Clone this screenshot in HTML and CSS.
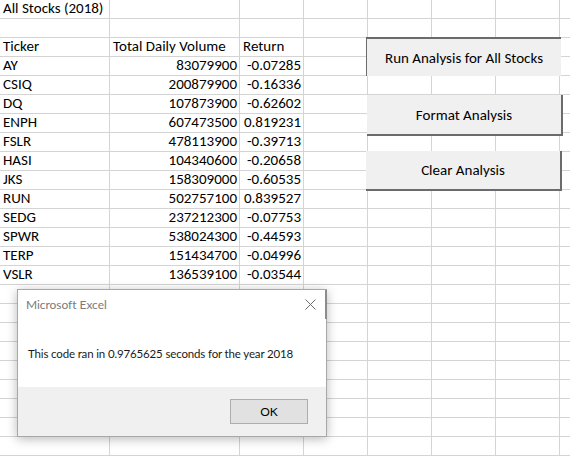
FILE: index.html
```html
<!DOCTYPE html>
<html>
<head>
<meta charset="utf-8">
<title>All Stocks (2018)</title>
<link rel="stylesheet" href="styles.css">
</head>
<body>
<div class="screen">
  <div class="sheet">
    <div class="c">All Stocks (2018)</div><div class="c"></div><div class="c"></div><div class="c"></div><div class="c"></div><div class="c"></div><div class="c"></div><div class="c"></div>
    <div class="c"></div><div class="c"></div><div class="c"></div><div class="c"></div><div class="c"></div><div class="c"></div><div class="c"></div><div class="c"></div>
    <div class="c">Ticker</div><div class="c">Total Daily Volume</div><div class="c">Return</div><div class="c"></div><div class="c"></div><div class="c"></div><div class="c"></div><div class="c"></div>
    <div class="c">AY</div><div class="c n">83079900</div><div class="c n">-0.07285</div><div class="c"></div><div class="c"></div><div class="c"></div><div class="c"></div><div class="c"></div>
    <div class="c">CSIQ</div><div class="c n">200879900</div><div class="c n">-0.16336</div><div class="c"></div><div class="c"></div><div class="c"></div><div class="c"></div><div class="c"></div>
    <div class="c">DQ</div><div class="c n">107873900</div><div class="c n">-0.62602</div><div class="c"></div><div class="c"></div><div class="c"></div><div class="c"></div><div class="c"></div>
    <div class="c">ENPH</div><div class="c n">607473500</div><div class="c n">0.819231</div><div class="c"></div><div class="c"></div><div class="c"></div><div class="c"></div><div class="c"></div>
    <div class="c">FSLR</div><div class="c n">478113900</div><div class="c n">-0.39713</div><div class="c"></div><div class="c"></div><div class="c"></div><div class="c"></div><div class="c"></div>
    <div class="c">HASI</div><div class="c n">104340600</div><div class="c n">-0.20658</div><div class="c"></div><div class="c"></div><div class="c"></div><div class="c"></div><div class="c"></div>
    <div class="c">JKS</div><div class="c n">158309000</div><div class="c n">-0.60535</div><div class="c"></div><div class="c"></div><div class="c"></div><div class="c"></div><div class="c"></div>
    <div class="c">RUN</div><div class="c n">502757100</div><div class="c n">0.839527</div><div class="c"></div><div class="c"></div><div class="c"></div><div class="c"></div><div class="c"></div>
    <div class="c">SEDG</div><div class="c n">237212300</div><div class="c n">-0.07753</div><div class="c"></div><div class="c"></div><div class="c"></div><div class="c"></div><div class="c"></div>
    <div class="c">SPWR</div><div class="c n">538024300</div><div class="c n">-0.44593</div><div class="c"></div><div class="c"></div><div class="c"></div><div class="c"></div><div class="c"></div>
    <div class="c">TERP</div><div class="c n">151434700</div><div class="c n">-0.04996</div><div class="c"></div><div class="c"></div><div class="c"></div><div class="c"></div><div class="c"></div>
    <div class="c">VSLR</div><div class="c n">136539100</div><div class="c n">-0.03544</div><div class="c"></div><div class="c"></div><div class="c"></div><div class="c"></div><div class="c"></div>
    <div class="c"></div><div class="c"></div><div class="c"></div><div class="c"></div><div class="c"></div><div class="c"></div><div class="c"></div><div class="c"></div>
    <div class="c"></div><div class="c"></div><div class="c"></div><div class="c"></div><div class="c"></div><div class="c"></div><div class="c"></div><div class="c"></div>
    <div class="c"></div><div class="c"></div><div class="c"></div><div class="c"></div><div class="c"></div><div class="c"></div><div class="c"></div><div class="c"></div>
    <div class="c"></div><div class="c"></div><div class="c"></div><div class="c"></div><div class="c"></div><div class="c"></div><div class="c"></div><div class="c"></div>
    <div class="c"></div><div class="c"></div><div class="c"></div><div class="c"></div><div class="c"></div><div class="c"></div><div class="c"></div><div class="c"></div>
    <div class="c"></div><div class="c"></div><div class="c"></div><div class="c"></div><div class="c"></div><div class="c"></div><div class="c"></div><div class="c"></div>
    <div class="c"></div><div class="c"></div><div class="c"></div><div class="c"></div><div class="c"></div><div class="c"></div><div class="c"></div><div class="c"></div>
    <div class="c"></div><div class="c"></div><div class="c"></div><div class="c"></div><div class="c"></div><div class="c"></div><div class="c"></div><div class="c"></div>
    <div class="c"></div><div class="c"></div><div class="c"></div><div class="c"></div><div class="c"></div><div class="c"></div><div class="c"></div><div class="c"></div>
  </div>

  <div class="btn btn-run">Run Analysis for All Stocks</div>
  <div class="btn btn-format">Format Analysis</div>
  <div class="btn btn-clear">Clear Analysis</div>

  <div class="dialog">
    <div class="dlg-title">
      <span class="dlg-caption">Microsoft Excel</span>
      <svg class="dlg-close" width="11" height="11" viewBox="0 0 11 11"><path d="M0.5 0.5 L10.5 10.5 M10.5 0.5 L0.5 10.5" stroke="#6b6b6b" stroke-width="1" fill="none"/></svg>
      <span class="dlg-edge"></span>
    </div>
    <div class="dlg-body">This code ran in 0.9765625 seconds for the year 2018</div>
    <div class="dlg-foot"><div class="dlg-ok">OK</div></div>
  </div>
</div>
</body>
</html>
```

FILE: styles.css
```css
html, body {
  margin: 0;
  padding: 0;
  background: #ffffff;
}
.screen {
  position: relative;
  width: 570px;
  height: 457px;
  overflow: hidden;
}
.sheet {
  display: grid;
  grid-template-columns: 110px 130px 64px 64px 64px 64px 64px 64px;
  grid-auto-rows: 19px;
  font-family: Carlito, "Lato", "Liberation Sans", sans-serif;
  font-size: 15px;
  color: #000;
}
.c {
  box-sizing: border-box;
  border-right: 1px solid #d4d4d4;
  border-bottom: 1px solid #d4d4d4;
  padding: 0 2px 1px 3px;
  white-space: nowrap;
  display: flex;
  align-items: flex-end;
  line-height: 17px;
}
.c.n {
  justify-content: flex-end;
}
.btn {
  position: absolute;
  box-sizing: border-box;
  background: #f0f0f0;
  font-family: Carlito, "Lato", "Liberation Sans", sans-serif;
  font-size: 15px;
  color: #000;
  display: flex;
  align-items: center;
  justify-content: center;
}
.btn-run {
  left: 366px;
  top: 37px;
  width: 195px;
  height: 39px;
  border-top: 2px solid #6b6b6b;
  border-left: 1px solid #6b6b6b;
}
.btn-format {
  left: 367px;
  top: 95px;
  width: 196px;
  height: 41px;
  border-right: 2px solid #6b6b6b;
  border-bottom: 2px solid #6b6b6b;
}
.btn-clear {
  left: 366px;
  top: 151px;
  width: 196px;
  height: 40px;
  border-right: 2px solid #6b6b6b;
  border-bottom: 2px solid #6b6b6b;
}
.dialog {
  position: absolute;
  left: 17px;
  top: 289px;
  width: 310px;
  height: 148px;
  box-sizing: border-box;
  border: 1px solid #a8a8a8;
  background: #ffffff;
  box-shadow: 0 2px 10px rgba(0, 0, 0, 0.28);
  display: flex;
  flex-direction: column;
  font-family: "Lato", "Liberation Sans", sans-serif;
  font-size: 11.5px;
  letter-spacing: -0.15px;
  white-space: nowrap;
}
.dlg-title {
  position: relative;
  height: 29px;
  display: flex;
  align-items: center;
  justify-content: space-between;
  padding: 0 10px 0 8px;
}
.dlg-caption {
  color: #7a7a7a;
  font-size: 12px;
  letter-spacing: -0.05px;
}
.dlg-close {
  display: block;
}
.dlg-edge {
  position: absolute;
  right: -1px;
  top: 0;
  width: 2px;
  height: 29px;
  background: #8c8c8c;
}
.dlg-body {
  height: 68px;
  display: flex;
  align-items: center;
  padding-left: 10px;
  color: #1a1a1a;
}
.dlg-foot {
  flex: 1;
  background: #f0f0f0;
  display: flex;
  justify-content: flex-end;
  align-items: flex-start;
  padding: 12px 18px 0 0;
}
.dlg-ok {
  box-sizing: border-box;
  width: 78px;
  height: 25px;
  border: 1px solid #adadad;
  background: #e1e1e1;
  display: flex;
  align-items: center;
  justify-content: center;
  color: #000;
  font-size: 12px;
  letter-spacing: 0;
}
```
